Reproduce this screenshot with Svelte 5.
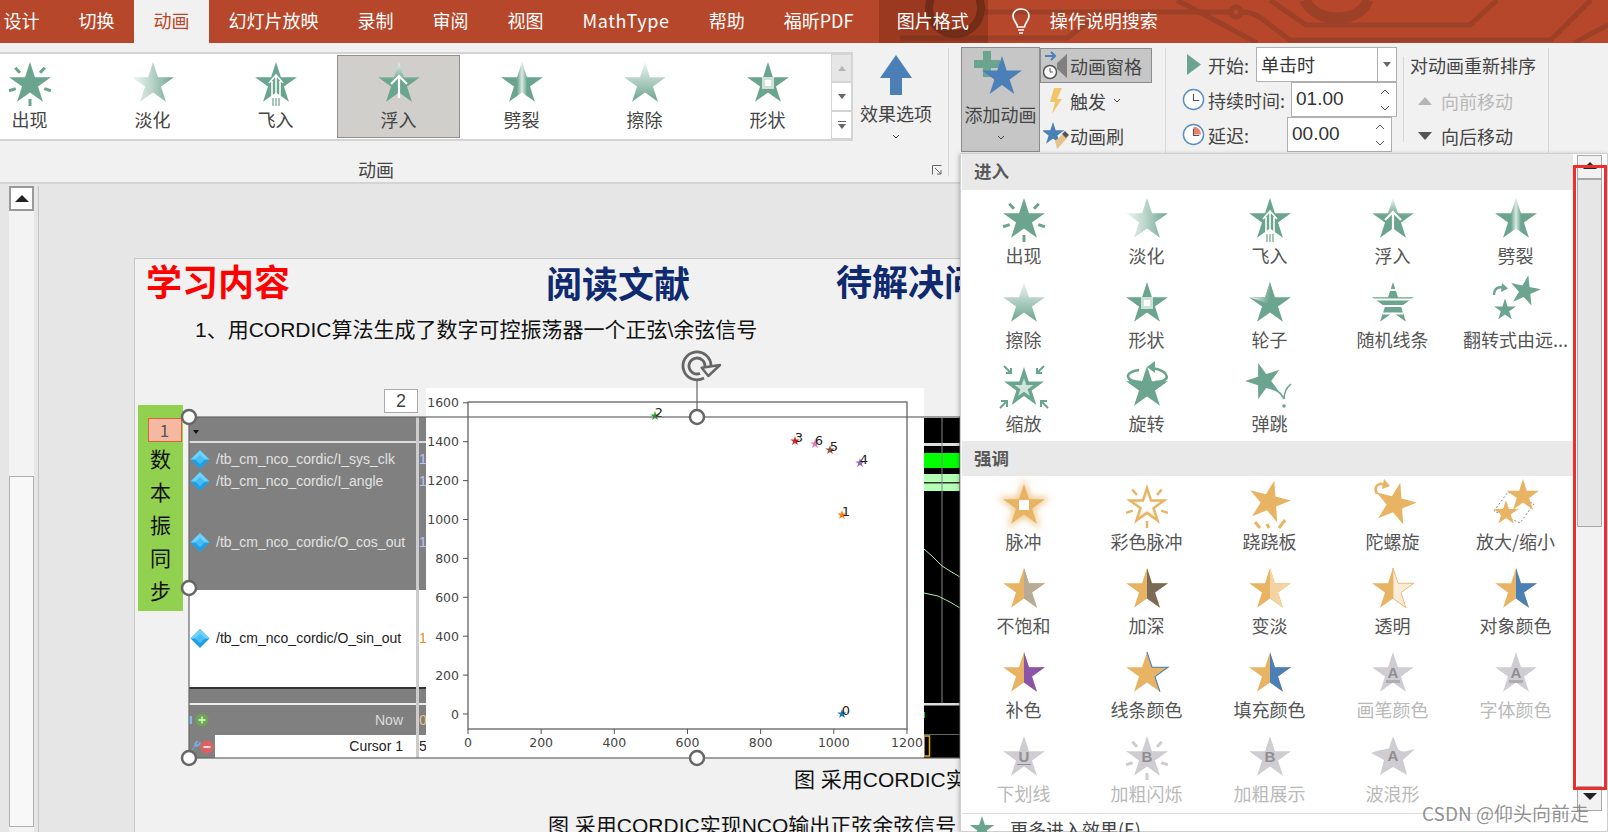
<script>
	const GREEN = '#6ba48f';
	const GOLD = '#e8b464';
	const GRAY = '#cfcdd1';

	function star(r = 22, cx = 0, cy = 0, rot = 0) {
		let pts = [];
		for (let i = 0; i < 10; i++) {
			const rad = i % 2 == 0 ? r : r * 0.382;
			const a = ((i * 36 + rot - 90) * Math.PI) / 180;
			pts.push((cx + rad * Math.cos(a)).toFixed(2) + ' ' + (cy + rad * Math.sin(a)).toFixed(2));
		}
		return 'M' + pts.join('L') + 'Z';
	}

	// the right half of the star, for the two-tone emphasis icons
	const halfR = 'M0 -22L5 -6.8L21 -6.8L8 2.6L13 17.8L0 8.4Z';
	const S = star();
	const rays = [42, 108, 180, 252, 318].map((d) => {
		const a = ((d - 90) * Math.PI) / 180;
		return { x1: 15 * Math.cos(a), y1: 15 * Math.sin(a), x2: 22 * Math.cos(a), y2: 22 * Math.sin(a) };
	});

	const tabs = ['设计', '切换', '动画', '幻灯片放映', '录制', '审阅', '视图', 'MathType', '帮助', '福昕PDF'];
	const gallery = [
		{ label: '出现', icon: 'appear' },
		{ label: '淡化', icon: 'fade' },
		{ label: '飞入', icon: 'fly' },
		{ label: '浮入', icon: 'float', on: true },
		{ label: '劈裂', icon: 'split' },
		{ label: '擦除', icon: 'wipe' },
		{ label: '形状', icon: 'shape' }
	];
	const enter = [
		{ label: '出现', icon: 'appear' },
		{ label: '淡化', icon: 'fade' },
		{ label: '飞入', icon: 'fly' },
		{ label: '浮入', icon: 'float' },
		{ label: '劈裂', icon: 'split' },
		{ label: '擦除', icon: 'wipe' },
		{ label: '形状', icon: 'shape' },
		{ label: '轮子', icon: 'wheel' },
		{ label: '随机线条', icon: 'lines' },
		{ label: '翻转式由远...', icon: 'flip' },
		{ label: '缩放', icon: 'zoom' },
		{ label: '旋转', icon: 'swivel' },
		{ label: '弹跳', icon: 'bounce' }
	];
	const emphasis = [
		{ label: '脉冲', icon: 'pulse' },
		{ label: '彩色脉冲', icon: 'colorpulse' },
		{ label: '跷跷板', icon: 'teeter' },
		{ label: '陀螺旋', icon: 'spin' },
		{ label: '放大/缩小', icon: 'grow' },
		{ label: '不饱和', icon: 'half', c: '#b7aa96' },
		{ label: '加深', icon: 'half', c: '#7a6b57' },
		{ label: '变淡', icon: 'half', c: '#f3d3a2' },
		{ label: '透明', icon: 'clear' },
		{ label: '对象颜色', icon: 'half', c: '#4a7fb8' },
		{ label: '补色', icon: 'half', c: '#8a55a8' },
		{ label: '线条颜色', icon: 'line' },
		{ label: '填充颜色', icon: 'half', c: '#4a7fb8' },
		{ label: '画笔颜色', icon: 'letter', ch: 'A', bar: true, off: true },
		{ label: '字体颜色', icon: 'letter', ch: 'A', bar: true, off: true },
		{ label: '下划线', icon: 'letter', ch: 'U', under: true, off: true },
		{ label: '加粗闪烁', icon: 'flash', ch: 'B', off: true },
		{ label: '加粗展示', icon: 'letter', ch: 'B', off: true },
		{ label: '波浪形', icon: 'wave', ch: 'A', off: true }
	];

	// plot is drawn in page coordinates through its viewBox
	const yTicks = [1600, 1400, 1200, 1000, 800, 600, 400, 200, 0].map((v) => ({ v, y: 713 - v * 0.1945 }));
	const xTicks = [0, 200, 400, 600, 800, 1000, 1200].map((v) => ({ v, x: 468 + v * 0.3658 }));
	const points = [
		{ n: 0, x: 842, y: 713, c: '#1f77b4' },
		{ n: 1, x: 842, y: 514, c: '#ff7f0e' },
		{ n: 2, x: 655, y: 415, c: '#2ca02c' },
		{ n: 3, x: 795, y: 440, c: '#d62728' },
		{ n: 4, x: 860, y: 462, c: '#9467bd' },
		{ n: 5, x: 830, y: 449, c: '#8c564b' },
		{ n: 6, x: 815, y: 443, c: '#e377c2' }
	];
	const handles = [
		[189, 416], [697, 416], [189, 587], [189, 757], [697, 757]
	];
	const vertical = ['数', '本', '振', '同', '步'];
</script>

{#snippet icon(it)}
	<svg class="ico" viewBox="-30 -28 60 48" aria-hidden="true">
		{#if it.icon == 'appear'}
			{#each rays as r}
				<line x1={r.x1} y1={r.y1} x2={r.x2} y2={r.y2} stroke={GREEN} stroke-width="3" />
			{/each}
			<path d={S} fill={GREEN} stroke="#fff" stroke-width="1.5" paint-order="stroke" />
		{:else if it.icon == 'fade'}
			<path d={S} fill="url(#gFade)" />
		{:else if it.icon == 'fly'}
			<path d={S} fill={GREEN} />
			<path d="M-7 -1L0 -9L7 -1M-4 -3V12M0 -8V12M4 -3V12" fill="none" stroke="#fff" stroke-width="1.6" />
			<path d="M-3 14V22M0 14V22M3 14V22" stroke={GREEN} stroke-width="1.2" fill="none" />
		{:else if it.icon == 'float'}
			<path d={S} fill="url(#gFloat)" />
			<path d="M-8 0L0 -8L8 0M0 -8V14" fill="none" stroke="#fff" stroke-width="2.2" />
		{:else if it.icon == 'split'}
			<path d={S} fill="url(#gSplit)" />
		{:else if it.icon == 'wipe'}
			<path d={S} fill="url(#gWipe)" />
		{:else if it.icon == 'shape'}
			<path d={S} fill={GREEN} />
			<rect x="-6" y="-7" width="12" height="12" fill="#cfe0da" />
			<rect x="-3" y="-4" width="6" height="6" fill="#fff" />
		{:else if it.icon == 'wheel'}
			<path d={S} fill={GREEN} />
			<path d="M0 0L-21 -6.8H-5L0 -22Z" fill="url(#gWheel)" />
		{:else if it.icon == 'lines'}
			<path d={S} fill={GREEN} />
			<path d="M-4 -14H4M-22 -4.5H22M-22 2H22M-10 9.5H10" stroke="#fff" stroke-width="1.8" />
		{:else if it.icon == 'flip'}
			<path d={star(16, 9, -13, 12)} fill={GREEN} />
			<path d={star(11.5, -11, 6, 0)} fill={GREEN} />
			<path d="M-22 -9C-22 -16 -17 -18 -12 -16" fill="none" stroke={GREEN} stroke-width="2.4" />
			<path d="M-14 -21L-8 -15.5L-15 -12Z" fill={GREEN} />
		{:else if it.icon == 'zoom'}
			<path d={star(21)} fill={GREEN} />
			<path d={star(10, 0, 0)} fill="#d2e2dc" />
			<path d="M-20 -22L-13 -15M-13 -20V-15H-18M20 -22L13 -15M13 -20V-15H18M-24 20L-17 13M-23 13H-17V19M24 20L17 13M23 13H17V19" stroke={GREEN} stroke-width="2" fill="none" />
		{:else if it.icon == 'swivel'}
			<path d={S} fill={GREEN} />
			<path d="M-8 -18C-24 -16 -22 -6 -6 -6M8 -6C24 -6 24 -16 6 -20" fill="none" stroke={GREEN} stroke-width="2.6" />
			<path d="M8 -27V-15L0 -21Z" fill={GREEN} />
		{:else if it.icon == 'bounce'}
			<path d={star(19, -6, -7, -18)} fill={GREEN} />
			<path d="M21 -4C16 0 14 6 14 11C11 5 8 3 5 2" fill="none" stroke={GREEN} stroke-width="1.6" />
			<circle cx="14" cy="18" r="1.8" fill={GREEN} />
		{:else if it.icon == 'pulse'}
			<path d={star(28)} fill={GOLD} opacity="0.75" filter="url(#blur3)" />
			<path d={S} fill={GOLD} />
			<rect x="-5" y="-6" width="10" height="10" fill="#fff" />
		{:else if it.icon == 'colorpulse'}
			{#each rays as r}
				<line x1={r.x1} y1={r.y1} x2={r.x2} y2={r.y2} stroke={GOLD} stroke-width="2.4" />
			{/each}
			<path d={S} fill={GOLD} stroke="#fff" stroke-width="1.5" paint-order="stroke" />
			<path d={star(14)} fill="url(#gGlow)" />
		{:else if it.icon == 'teeter'}
			<path d={star(22, -1, -4, 14)} fill={GOLD} />
			<path d="M-15 16L-10 22M15 14L9 22M-3 18L-1 22" stroke={GOLD} stroke-width="3" fill="none" />
		{:else if it.icon == 'spin'}
			<path d={star(22, 2, -2, 14)} fill={GOLD} />
			<path d="M-16 -12C-20 -20 -14 -24 -8 -21" fill="none" stroke={GOLD} stroke-width="2.6" />
			<path d="M-9 -27L-3 -20L-11 -17Z" fill={GOLD} />
		{:else if it.icon == 'grow'}
			<path d="M-22 5L-8 -14L18 -2L4 17Z" fill="none" stroke="#8c8c8c" stroke-dasharray="2 2" />
			<path d={star(17, 7, -10, 0)} fill={GOLD} />
			<path d={star(13, -10, 7, 0)} fill={GOLD} />
		{:else if it.icon == 'half'}
			<path d={S} fill={GOLD} />
			<path d={halfR} fill={it.c} />
		{:else if it.icon == 'clear'}
			<path d={S} fill={GOLD} />
			<path d={halfR} fill="#f9ecd9" stroke={GOLD} stroke-width="0.8" />
		{:else if it.icon == 'line'}
			<path d={S} fill={GOLD} />
			<path d="M0 -22L5 -6.8L21 -6.8L8 2.6L13 17.8" fill="none" stroke="#4a7fb8" stroke-width="1.1" />
		{:else if it.icon == 'wave'}
			<path d="M0 -22L5 -9C10 -4 15 -8 22 -9L10 2L14 17L0 9L-13 17L-9 2L-22 -5C-12 -9 -8 -8 -4 -10Z" fill={GRAY} />
			<text x="0" y="3" class="ltr">{it.ch}</text>
		{:else}
			{#if it.icon == 'flash'}
				{#each rays as r}
					<line x1={r.x1} y1={r.y1} x2={r.x2} y2={r.y2} stroke={GRAY} stroke-width="3" />
				{/each}
			{/if}
			<path d={S} fill={GRAY} stroke="#fff" stroke-width={it.icon == 'flash' ? 1.5 : 0} paint-order="stroke" />
			<text x="0" y="4" class="ltr">{it.ch}</text>
			{#if it.bar}
				<rect x="-7" y="6" width="14" height="3" fill="#adacb0" />
			{/if}
			{#if it.under}
				<line x1="-7" x2="7" y1="6.5" y2="6.5" stroke="#8f8e92" />
			{/if}
		{/if}
	</svg>
{/snippet}

{#snippet cell(it)}
	<div class="cell" class:off={it.off}>
		{@render icon(it)}
		<span>{it.label}</span>
	</div>
{/snippet}

{#snippet chevron()}
	<svg class="chev" viewBox="0 0 8 5"><path d="M1 1L4 4L7 1" fill="none" stroke="#444" /></svg>
{/snippet}

{#snippet spinner()}
	<div class="spin">
		<svg viewBox="0 0 10 6"><path d="M1 5L5 1L9 5" fill="none" stroke="#555" /></svg>
		<svg viewBox="0 0 10 6"><path d="M1 1L5 5L9 1" fill="none" stroke="#555" /></svg>
	</div>
{/snippet}

{#snippet diamond()}
	<svg viewBox="0 0 20 20"><path d="M10 0L20 10L10 20L0 10Z" fill="#1f9fe6" /><path d="M10 0L20 10H0Z" fill="#6fd0fa" /><path d="M10 5L15 10L10 15L5 10Z" fill="#47bdf5" /></svg>
{/snippet}

<svg class="defs" width="0" height="0">
	<defs>
		<linearGradient id="gFade"><stop offset="0" stop-color="#eef5f2" /><stop offset="0.45" stop-color="#bcd6cc" /><stop offset="1" stop-color="#6ba48f" /></linearGradient>
		<linearGradient id="gWipe" x2="0" y2="1"><stop offset="0" stop-color="#eef5f2" /><stop offset="1" stop-color="#6ba48f" /></linearGradient>
		<linearGradient id="gFloat" x2="0" y2="1"><stop offset="0" stop-color="#eef5f2" /><stop offset="0.45" stop-color="#6ba48f" /></linearGradient>
		<linearGradient id="gSplit"><stop offset="0.38" stop-color="#6ba48f" /><stop offset="0.5" stop-color="#dbe9e4" /><stop offset="0.62" stop-color="#6ba48f" /></linearGradient>
		<linearGradient id="gWheel" gradientUnits="userSpaceOnUse" x1="-21" y1="-8" x2="-1" y2="-3"><stop offset="0" stop-color="#fff" /><stop offset="1" stop-color="#6ba48f" /></linearGradient>
		<radialGradient id="gGlow"><stop offset="0.4" stop-color="#fff" /><stop offset="1" stop-color="#fbeed8" /></radialGradient>
		<filter id="blur3" x="-50%" y="-50%" width="200%" height="200%"><feGaussianBlur stdDeviation="3.500" /></filter>
	</defs>
</svg>

<div class="app">
	<header class="tabs">
		<svg class="circuit" viewBox="0 0 1608 43" preserveAspectRatio="none">
			<g fill="none" stroke="#9c4028" stroke-width="5">
				<path d="M985 12H1230M1242 12C1258 12 1262 20 1290 40H1551L1591 0" />
				<path d="M1177 0L1257 43" />
				<path d="M1270 0L1306 25H1470L1497 0" />
				<path d="M1608 25L1574 43" />
				<path d="M900 38H1067L1100 14" />
				<circle cx="1236" cy="12" r="5" />
			</g>
			<path d="M1305 0C1315 24 1360 24 1368 0" fill="none" stroke="#9c4028" stroke-width="11" />
			<circle cx="955" cy="8" r="26" fill="none" stroke="#82351f" stroke-width="8" />
		</svg>
		{#each tabs as t}
			<div class="tab" class:active={t == '动画'} class:wide={t == 'MathType'}>{t}</div>
		{/each}
		<div class="tab fmt">图片格式</div>
		<svg class="bulb" viewBox="0 0 20 28"><path d="M6.500 20C6 15 2 14 2 9C2 4.500 5.500 2 10 2S18 4.500 18 9C18 14 14 15 13.500 20ZM7 23H13M8 26H12" fill="none" stroke="#fff" stroke-width="1.700" /></svg>
		<div class="search">操作说明搜索</div>
	</header>

	<section class="ribbon">
		<div class="group-anim">
			<div class="anim-top">
				<div class="gallery">
					<div class="gal-items">
						{#each gallery as it}
							<div class="gal-item" class:on={it.on}>
								{@render icon(it)}
								<span>{it.label}</span>
							</div>
						{/each}
					</div>
					<div class="gal-scroll">
						<button class="dis"><i class="up"></i></button>
						<button><i class="down"></i></button>
						<button class="more"><b></b><i class="down"></i></button>
					</div>
				</div>
				<div class="effect">
					<svg viewBox="0 0 32 40"><path d="M16 0L32 23H22V40H10V23H0Z" fill="#4a7fb8" /></svg>
					<span>效果选项</span>
					{@render chevron()}
				</div>
			</div>
			<div class="group-label">
				动画
				<svg class="launch" viewBox="0 0 10 10"><path d="M0.500 9.500V0.500H9.500M3 3L9 9M5 9H9V5" fill="none" stroke="#666" /></svg>
			</div>
		</div>

		<div class="add">
			<svg viewBox="0 0 60 50">
				<path d="M12 1H20V10H29V18H20V27H12V18H3V10H12Z" fill={GREEN} />
				<path d={star(21, 31, 27)} fill="#4a7fb8" />
			</svg>
			<span>添加动画</span>
			{@render chevron()}
		</div>

		<div class="tools">
			<div class="tool pane">
				<svg viewBox="0 0 26 30">
					<path d="M2 5H11M8 1L12 5L8 9" fill="none" stroke="#4a7fb8" stroke-width="2" />
					<path d="M14 12L24 3V27L14 18Z" fill="#7f7f7f" />
					<circle cx="7" cy="21" r="6.500" fill="#fff" stroke="#555" stroke-width="1.500" />
					<path d="M7 17V21H10" fill="none" stroke="#555" />
				</svg>
				动画窗格
			</div>
			<div class="tool">
				<svg viewBox="0 0 26 30"><path d="M11 2H19L14 13H19L9 28L12 16H7Z" fill="#f0c668" /></svg>
				触发 {@render chevron()}
			</div>
			<div class="tool">
				<svg viewBox="0 0 26 30">
					<path d={star(12, 10, 13)} fill="#4a7fb8" />
					<path d="M12 20L20 13L24 17L17 25L14 28Z" fill="#e8c288" />
					<path d="M19 13L22 10L26 14L23 17Z" fill="#555" />
				</svg>
				动画刷
			</div>
		</div>

		<div class="timing">
			<div class="t-row">
				<svg class="play" viewBox="0 0 14 21"><path d="M0 0L14 10.500L0 21Z" fill={GREEN} /></svg>
				<span class="t-label">开始:</span>
				<div class="combo">单击时<div class="combo-btn"><i class="down"></i></div></div>
			</div>
			<div class="t-row">
				<svg class="clock" viewBox="0 0 24 24"><circle cx="12" cy="12" r="10.500" fill="#fff" stroke="#5a8fc4" stroke-width="1.500" /><path d="M12 6V13H18" fill="none" stroke="#555" stroke-width="1.200" /></svg>
				<span class="t-label">持续时间:</span>
				<div class="num first">01.00 {@render spinner()}</div>
			</div>
			<div class="t-row">
				<svg class="clock" viewBox="0 0 24 24"><circle cx="12" cy="12" r="10.500" fill="#fff" stroke="#5a8fc4" stroke-width="1.500" /><path d="M12 12V4A8 8 0 0 1 20 12Z" fill="#e8836a" /><path d="M12 6V13H18" fill="none" stroke="#555" stroke-width="1.200" /></svg>
				<span class="t-label">延迟:</span>
				<div class="num second">00.00 {@render spinner()}</div>
			</div>
		</div>

		<div class="reorder">
			<div>对动画重新排序</div>
			<div class="mv disabled"><i class="up"></i>向前移动</div>
			<div class="mv"><i class="down"></i>向后移动</div>
		</div>
	</section>

	<main class="stage">
		<div class="side-scroll">
			<button><i class="up big"></i></button>
			<div class="side-thumb"></div>
		</div>

		<div class="slide">
			<div class="title red">学习内容</div>
			<div class="title navy one">阅读文献</div>
			<div class="title navy two">待解决问题</div>
			<div class="line1">1、用CORDIC算法生成了数字可控振荡器一个正弦\余弦信号</div>

			<div class="note">
				<div class="badge">1</div>
				{#each vertical as ch}
					<div class="vch">{ch}</div>
				{/each}
			</div>
			<div class="badge2">2</div>

			<div class="wave">
				<div class="names">
					<div class="w-gray">
						<div class="w-head"><i class="down tiny"></i></div>
						<div class="sig top">{@render diamond()}/tb_cm_nco_cordic/I_sys_clk</div>
						<div class="sig">{@render diamond()}/tb_cm_nco_cordic/I_angle</div>
						<div class="sig gap">{@render diamond()}/tb_cm_nco_cordic/O_cos_out</div>
					</div>
					<div class="w-white">
						<div class="sig dark">{@render diamond()}/tb_cm_nco_cordic/O_sin_out</div>
					</div>
					<div class="w-rule"></div>
					<div class="w-strip"></div>
					<div class="w-now">
						<svg viewBox="-6 0 20 14"><rect x="-6" y="3" width="3" height="8" fill="#8fb4e8" /><circle cx="7" cy="7" r="6.500" fill="#6aa84f" /><path d="M3.500 7H10.500M7 3.500V10.500" stroke="#e8f5e0" stroke-width="1.500" /></svg>
						<span>Now</span>
					</div>
					<div class="w-cursor">
						<svg viewBox="-11 0 25 14"><path d="M-10 13L-5 6M-5 6C-6 3 -4 1 -2 1L-4 4L-2 5L0 2C1 5 -2 7 -5 6" fill="#7fa6e0" stroke="#7fa6e0" /><circle cx="7" cy="7" r="6.500" fill="#e06060" /><path d="M3.500 7H10.500" stroke="#fde" stroke-width="2" /></svg>
						<div>Cursor 1</div>
					</div>
				</div>
				<div class="vals">
					<div class="v-gray">
						<div class="v-head"></div>
						<div class="v-val top">1</div>
						<div class="v-val">1</div>
						<div class="v-val gap">1</div>
					</div>
					<div class="v-white"><div class="v-val orange">1</div></div>
					<div class="w-rule"></div>
					<div class="w-strip"></div>
					<div class="v-val now">0</div>
					<div class="v-val cur">5</div>
				</div>
			</div>

			<svg class="plot" viewBox="426 387 498 370">
				<rect x="468" y="401" width="439" height="327" fill="none" stroke="#777" stroke-width="1.500" />
				{#each yTicks as t}
					<line x1="463" x2="468" y1={t.y} y2={t.y} stroke="#555" />
					<text x="459" y={t.y + 4.500} text-anchor="end" class="tick">{t.v}</text>
				{/each}
				{#each xTicks as t}
					<line x1={t.x} x2={t.x} y1="728" y2="733" stroke="#555" />
					<text x={t.x} y="746" text-anchor="middle" class="tick">{t.v}</text>
				{/each}
				{#each points as p}
					<path d={star(5, p.x, p.y)} fill={p.c} />
					<text x={p.x + 4} y={p.y + 1} text-anchor="middle" class="tick pt">{p.n}</text>
				{/each}
			</svg>

			<svg class="trace" viewBox="924 417 36 340">
				<rect x="924" y="417" width="36" height="340" fill="#000" />
				<rect x="924" y="442" width="36" height="3" fill="#ddd" />
				<rect x="924" y="452" width="36" height="15" fill="#00ff00" />
				<rect x="924" y="473" width="36" height="17" fill="#b3ffb3" />
				<rect x="924" y="481" width="36" height="1.500" fill="#333" />
				<rect x="941.500" y="417" width="1" height="285" fill="#888" />
				<path d="M924 548L932 555L942 565L950 570L960 576M924 592L938 595L950 601L960 607" fill="none" stroke="#a8eea8" />
				<rect x="924" y="702" width="36" height="2.500" fill="#ddd" />
				<rect x="924" y="733" width="36" height="1" fill="#666" />
				<rect x="924" y="711" width="1" height="6" fill="#00d000" />
				<rect x="924" y="735" width="5.500" height="20" fill="none" stroke="#e0b020" stroke-width="1.500" />
			</svg>

			<div class="cap1">图 采用CORDIC实现NCO输出正弦余弦信号</div>
			<div class="cap2">图 采用CORDIC实现NCO输出正弦余弦信号</div>

			<!-- selection frame, in page coordinates -->
			<svg class="select" viewBox="134 340 840 440">
				<rect x="189" y="416" width="771" height="341" fill="none" stroke="#666" stroke-width="1.200" />
				<line x1="697" x2="697" y1="380" y2="408" stroke="#666" stroke-width="1.200" />
				<g fill="none" stroke="#666" stroke-width="2.800">
					<path d="M711 365A14 14 0 1 0 704 377" />
					<path d="M705 365A8 8 0 1 0 700 372.400" />
				</g>
				<path d="M701.700 366.700L720 364L708.300 375Z" fill="#f1f1f1" stroke="#666" stroke-width="2.500" stroke-linejoin="round" />
				{#each handles as h}
					<circle cx={h[0]} cy={h[1]} r="7" fill="#fff" stroke="#666" stroke-width="2.500" />
				{/each}
			</svg>
		</div>
	</main>

	<div class="dropdown">
		<div class="sec">进入</div>
		<div class="grid">
			{#each enter as it}
				{@render cell(it)}
			{/each}
		</div>
		<div class="sec second">强调</div>
		<div class="grid pad">
			{#each emphasis as it}
				{@render cell(it)}
			{/each}
		</div>
		<div class="more-row">
			<svg viewBox="-22 -22 44 44"><path d={S} fill={GREEN} /></svg>
			更多进入效果(E)
		</div>

		<div class="vscroll">
			<button><i class="up big"></i></button>
			<div class="vthumb"></div>
			<div class="vtrack"></div>
			<button class="dn"><i class="down big"></i></button>
		</div>
	</div>

	<div class="redbox"></div>
	<div class="watermark">CSDN @仰头向前走</div>
</div>

<style>
	:global(body) {
		margin: 0;
		background: #e6e6e6;
	}
	.defs {
		position: absolute;
	}
	.app {
		position: relative;
		width: 1608px;
		height: 832px;
		overflow: hidden;
		display: flex;
		flex-direction: column;
		font-family: "Noto Sans CJK SC", "Liberation Sans", sans-serif;
		font-size: 18px;
		color: #444;
		background: #e6e6e6;
	}
	i {
		display: block;
		width: 0;
		height: 0;
		border-left: 4px solid transparent;
		border-right: 4px solid transparent;
	}
	i.up {
		border-bottom: 5px solid #b5b5b5;
	}
	i.down {
		border-top: 5px solid #666;
	}
	i.big.up {
		border-left-width: 7px;
		border-right-width: 7px;
		border-bottom: 7px solid #222;
	}
	i.big.down {
		border-left-width: 7px;
		border-right-width: 7px;
		border-top: 7px solid #222;
	}
	button {
		padding: 0;
		margin: 0;
		display: flex;
		align-items: center;
		justify-content: center;
		background: #fff;
		border: 1px solid #d0d0d0;
	}

	/* title bar */
	.tabs {
		position: relative;
		height: 43px;
		flex: none;
		display: flex;
		align-items: stretch;
		background: #b7472a;
		color: #fff;
		padding-left: 0;
		overflow: hidden;
	}
	.circuit {
		position: absolute;
		left: 0;
		top: 0;
		width: 1608px;
		height: 43px;
	}
	.tab {
		position: relative;
		padding: 0 19.500px;
		line-height: 41px;
		white-space: nowrap;
	}
	.tab:first-of-type {
		margin-left: -16px;
	}
	.tab.wide {
		letter-spacing: 0.6px;
	}
	.tab.active {
		background: #f1f1f1;
		color: #b7472a;
	}
	.tab.fmt {
		background: rgba(80, 20, 5, 0.28);
		margin-left: 6px;
		padding: 0 18px;
		width: 73px;
		box-sizing: content-box;
	}
	.bulb {
		position: relative;
		width: 20px;
		height: 28px;
		margin: 7px 0 0 23px;
	}
	.search {
		position: relative;
		line-height: 41px;
		margin-left: 19px;
	}

	/* ribbon */
	.ribbon {
		flex: none;
		height: 139px;
		display: flex;
		background: #f1f1f1;
		border-bottom: 2px solid #d4d4d4;
		color: #444;
		white-space: nowrap;
	}
	.group-anim {
		width: 948px;
		flex: none;
		margin-top: 5px;
		border-right: 1px solid #d8d8d8;
		height: 128px;
		display: flex;
		flex-direction: column;
	}
	.anim-top {
		display: flex;
	}
	.gallery {
		margin-top: 4px;
		width: 853px;
		height: 89px;
		box-sizing: border-box;
		background: #fff;
		border-top: 2px solid #d4d4d4;
		border-bottom: 2px solid #d4d4d4;
		display: flex;
		justify-content: space-between;
		overflow: hidden;
	}
	.gal-items {
		display: flex;
		margin-left: -32px;
	}
	.gal-item {
		width: 123px;
		height: 83px;
		box-sizing: border-box;
		display: flex;
		flex-direction: column;
		align-items: center;
		padding-top: 0;
		border: 1px solid transparent;
		margin-top: 1px;
	}
	.gal-item span {
		line-height: 24px;
		margin-top: 3px;
	}
	.gal-item.on {
		background: #d0cfcc;
		border-color: #8e8e8e;
	}
	.ico {
		width: 60px;
		height: 48px;
		overflow: visible;
		flex: none;
	}
	.ltr {
		font-family: "Liberation Sans", sans-serif;
		font-size: 15px;
		font-weight: 700;
		fill: #8f8e92;
		text-anchor: middle;
	}
	.gal-scroll {
		width: 22px;
		display: flex;
		flex-direction: column;
		flex: none;
	}
	.gal-scroll button {
		flex: 1;
		border: 1px solid #d4d4d4;
		border-right: 2px solid #d4d4d4;
	}
	.gal-scroll button.dis {
		background: #e6e6e6;
	}
	.gal-scroll .more {
		flex-direction: column;
		gap: 2px;
	}
	.gal-scroll b {
		display: block;
		width: 8px;
		height: 1px;
		background: #666;
	}
	.effect {
		width: 86px;
		display: flex;
		flex-direction: column;
		align-items: center;
	}
	.effect svg:first-child {
		width: 32px;
		height: 40px;
		margin-top: 7px;
	}
	.effect span {
		margin-top: 5px;
		line-height: 26px;
	}
	.chev {
		width: 8px;
		height: 5px;
		margin-top: 8px;
		flex: none;
	}
	.group-label {
		position: relative;
		height: 20px;
		margin-top: 18px;
		line-height: 20px;
		text-align: center;
		padding-right: 196px;
	}
	.launch {
		position: absolute;
		left: 932px;
		top: 6px;
		width: 10px;
		height: 10px;
	}
	.add {
		width: 79px;
		height: 105px;
		margin: 4px 0 0 12px;
		box-sizing: border-box;
		flex: none;
		background: #c6c6c6;
		border: 1px solid #8c8c8c;
		display: flex;
		flex-direction: column;
		align-items: center;
	}
	.add svg:first-child {
		width: 60px;
		height: 50px;
		margin-top: 2px;
	}
	.add span {
		margin-top: 1px;
		line-height: 26px;
	}
	.tools {
		width: 125px;
		flex: none;
		margin-top: 5px;
		height: 105px;
		border-right: 1px solid #d8d8d8;
	}
	.tool {
		height: 35px;
		width: 112px;
		box-sizing: border-box;
		display: flex;
		align-items: center;
		gap: 1px;
		padding-left: 2px;
		border: 1px solid transparent;
	}
	.tool svg:first-child {
		width: 26px;
		height: 30px;
		flex: none;
	}
	.tool .chev {
		margin-top: 0;
		margin-left: 6px;
	}
	.tool.pane {
		background: #c6c6c6;
		border-color: #8c8c8c;
	}
	.timing {
		width: 237px;
		flex: none;
		margin-top: 4px;
	}
	.t-row {
		position: relative;
		height: 35px;
		display: flex;
		align-items: center;
	}
	.play {
		width: 14px;
		height: 21px;
		margin-left: 21px;
		margin-right: 7px;
		flex: none;
	}
	.clock {
		width: 23px;
		height: 23px;
		margin-left: 16px;
		margin-right: 3px;
		flex: none;
	}
	.t-label {
		color: #444;
	}
	.combo,
	.num {
		position: absolute;
		background: #fff;
		border: 1px solid #b0b0b0;
		box-sizing: border-box;
		height: 35px;
		line-height: 32px;
		padding-left: 4px;
		color: #333;
	}
	.combo {
		left: 90px;
		top: 0;
		width: 141px;
	}
	.combo-btn {
		position: absolute;
		right: 0;
		top: 0;
		bottom: 0;
		width: 18px;
		border-left: 1px solid #b0b0b0;
		display: flex;
		align-items: center;
		justify-content: center;
	}
	.num {
		font-family: "Liberation Sans", sans-serif;
		font-size: 19px;
	}
	.num.first {
		left: 125px;
		top: 0;
		width: 106px;
	}
	.num.second {
		left: 121px;
		top: 0;
		width: 105px;
	}
	.spin {
		position: absolute;
		right: 6px;
		top: 6px;
		display: flex;
		flex-direction: column;
		gap: 10px;
	}
	.spin svg {
		width: 10px;
		height: 6px;
		display: block;
	}
	.reorder {
		width: 146px;
		height: 128px;
		flex: none;
		margin-top: 5px;
		border-right: 1px solid #d8d8d8;
		box-sizing: border-box;
		padding-left: 7px;
		position: relative;
	}
	.reorder > div:first-child {
		height: 35px;
		margin-top: 0;
		line-height: 35px;
	}
	.reorder::before {
		content: "";
		position: absolute;
		left: 0;
		top: 9px;
		height: 85px;
		border-left: 1px solid #d8d8d8;
	}
	.mv {
		height: 35px;
		display: flex;
		align-items: center;
		gap: 9px;
		padding-left: 8px;
	}
	.mv.disabled {
		color: #b8b8b8;
	}
	.mv i {
		border-left-width: 7px;
		border-right-width: 7px;
	}
	.mv i.up {
		border-bottom-width: 8px;
	}
	.mv i.down {
		border-top-width: 8px;
		border-top-color: #555;
	}

	/* page area */
	.stage {
		position: relative;
		flex: 1;
		display: flex;
		align-items: flex-start;
		background: #e6e6e6;
		overflow: hidden;
	}
	.side-scroll {
		width: 25px;
		margin-left: 9px;
		margin-top: 2px;
		height: 660px;
		background: #f3f3f3;
		flex: none;
		position: relative;
	}
	.side-scroll button {
		width: 25px;
		height: 25px;
		box-sizing: border-box;
		border: 2px solid #999;
	}
	.side-thumb {
		position: absolute;
		left: 0;
		top: 290px;
		width: 25px;
		height: 351px;
		box-sizing: border-box;
		background: #f8f8f8;
		border: 1px solid #b0b0b0;
	}
	.stage::before {
		content: "";
		position: absolute;
		left: 38px;
		top: 2px;
		bottom: 0;
		border-left: 1px solid #c4c4c4;
	}
	.slide {
		position: relative;
		margin: 74px 0 0 100px;
		width: 1100px;
		height: 620px;
		background: #f1f1f1;
		border: 1px solid #c8c8c8;
		box-sizing: border-box;
		font-family: "Liberation Sans", "Noto Sans CJK SC", sans-serif;
		color: #000;
	}
	/* things on the slide sit on a free canvas */
	.slide > * {
		position: absolute;
	}
	.title {
		font-family: "Noto Sans CJK SC", sans-serif;
		font-size: 36px;
		font-weight: 700;
		line-height: 40px;
		top: 1px;
		white-space: nowrap;
	}
	.red {
		left: 11px;
		color: #ff0000;
	}
	.navy {
		color: #0f2a6e;
	}
	.navy.one {
		left: 411px;
		top: 3px;
	}
	.navy.two {
		left: 701px;
		top: 1px;
	}
	.line1 {
		left: 60px;
		top: 57px;
		font-size: 21px;
		line-height: 28px;
		white-space: nowrap;
		color: #111;
	}
	.note {
		left: 3px;
		top: 146px;
		width: 45px;
		height: 206px;
		background: #92d050;
		display: flex;
		flex-direction: column;
		align-items: center;
		font-family: "Noto Sans CJK SC", sans-serif;
	}
	.badge {
		width: 34px;
		height: 24px;
		box-sizing: border-box;
		margin: 13px 0 0 8px;
		background: #f4b9a0;
		border: 1px solid #e0603a;
		text-align: center;
		line-height: 22px;
		font-size: 17px;
		color: #555;
	}
	.vch {
		font-size: 21px;
		height: 33px;
		line-height: 33px;
		color: #111;
	}
	.vch:first-of-type {
		margin-top: 1px;
	}
	.badge2 {
		left: 249px;
		top: 130px;
		width: 34px;
		height: 24px;
		box-sizing: border-box;
		background: #fff;
		border: 1px solid #aaa;
		text-align: center;
		line-height: 22px;
		font-size: 18px;
		color: #444;
	}
	.wave {
		left: 54px;
		top: 158px;
		width: 237px;
		height: 341px;
		display: flex;
		background: #fff;
		overflow: hidden;
	}
	.names {
		width: 227px;
		flex: none;
		border-right: 3px solid #ccc;
		font-size: 14px;
	}
	.w-gray {
		height: 173px;
		background: #808080;
		color: #e2e2e2;
	}
	.w-head {
		height: 26px;
		border-bottom: 2px solid #ddd;
		padding: 13px 0 0 4px;
		box-sizing: border-box;
	}
	i.tiny {
		border-left-width: 3px;
		border-right-width: 3px;
		border-top: 4px solid #111;
	}
	.sig {
		height: 22px;
		display: flex;
		align-items: center;
		gap: 6px;
		padding-left: 1px;
		white-space: nowrap;
	}
	.sig.top {
		margin-top: 5px;
	}
	.sig :global(svg) {
		width: 20px;
		height: 19px;
		flex: none;
	}
	.sig.gap {
		margin-top: 39px;
	}
	.w-white {
		height: 97px;
		background: #fff;
		padding-top: 37px;
		box-sizing: border-box;
	}
	.sig.dark {
		color: #222;
	}
	.w-rule {
		height: 2px;
		background: #333;
	}
	.w-strip {
		height: 14px;
		background: #808080;
		border-bottom: 2px solid #eee;
	}
	.w-now {
		height: 30px;
		background: #808080;
		color: #ddd;
		display: flex;
		align-items: center;
		justify-content: space-between;
		padding: 0 13px 0 0;
	}
	.w-now svg {
		width: 20px;
		height: 14px;
	}
	.w-cursor {
		height: 23px;
		background: #808080;
		display: flex;
		align-items: center;
		color: #222;
		gap: 1px;
	}
	.w-cursor svg {
		width: 25px;
		height: 14px;
		flex: none;
	}
	.w-cursor div {
		flex: 1;
		background: #fff;
		height: 23px;
		line-height: 23px;
		text-align: right;
		padding-right: 13px;
	}
	.vals {
		flex: 1;
		display: flex;
		flex-direction: column;
		font-size: 14px;
		white-space: nowrap;
		background: #808080;
	}
	.v-gray {
		height: 173px;
		background: #808080;
	}
	.v-head {
		height: 26px;
		border-bottom: 2px solid #ddd;
		box-sizing: border-box;
	}
	.v-val {
		height: 22px;
		line-height: 22px;
		color: #b8c4ff;
	}
	.v-val.top {
		margin-top: 5px;
	}
	.v-val.gap {
		margin-top: 39px;
	}
	.v-white {
		height: 97px;
		background: #fff;
		padding-top: 37px;
		box-sizing: border-box;
	}
	.v-val.orange {
		color: #e09020;
	}
	.v-val.now {
		height: 30px;
		line-height: 30px;
		color: #e8c080;
	}
	.v-val.cur {
		height: 23px;
		line-height: 23px;
		background: #fff;
		color: #222;
	}
	.plot {
		left: 291px;
		top: 129px;
		width: 498px;
		height: 370px;
		background: #fff;
	}
	.tick {
		font-family: "DejaVu Sans", sans-serif;
		font-size: 12.500px;
		fill: #444;
	}
	.tick.pt {
		fill: #222;
		font-size: 13px;
	}
	.trace {
		left: 789px;
		top: 159px;
		width: 36px;
		height: 340px;
	}
	.cap1,
	.cap2 {
		font-size: 21px;
		line-height: 28px;
		white-space: nowrap;
		color: #111;
	}
	.cap1 {
		left: 659px;
		top: 507px;
	}
	.cap2 {
		left: 413px;
		top: 553px;
	}
	.select {
		left: -1px;
		top: 82px;
		width: 840px;
		height: 440px;
		pointer-events: none;
	}

	/* dropdown gallery */
	.dropdown {
		position: absolute;
		left: 960px;
		top: 153px;
		width: 648px;
		height: 679px;
		box-sizing: border-box;
		background: #fff;
		border: 1px solid #cfcfcf;
		box-shadow: -1px 1px 4px rgba(0, 0, 0, 0.25);
		color: #555;
	}
	.sec {
		height: 36px;
		line-height: 33px;
		width: 611px;
		margin-left: 1px;
		padding-left: 12px;
		box-sizing: border-box;
		background: #e9e9e9;
		font-weight: 700;
		font-size: 17.500px;
		color: #595959;
	}
	.sec.second {
		height: 35px;
		line-height: 33px;
		margin-top: 4px;
	}
	.grid {
		display: grid;
		grid-template-columns: repeat(5, 123px);
		grid-auto-rows: 84px;
		padding: 2px 0 0 1px;
		width: 616px;
		height: 247px;
		box-sizing: border-box;
	}
	.grid.pad {
		padding-top: 2px;
		height: 337px;
	}
	.cell {
		display: flex;
		flex-direction: column;
		align-items: center;
		white-space: nowrap;
	}
	.cell span {
		line-height: 24px;
		margin-top: 3px;
	}
	.cell.off {
		color: #b9b9b9;
	}
	.more-row {
		border-top: 1px solid #ddd;
		margin: 0 36px 0 1px;
		height: 40px;
		display: flex;
		align-items: flex-start;
		padding-top: 2px;
		gap: 15px;
		padding-left: 7px;
		color: #444;
	}
	.more-row svg {
		width: 26px;
		height: 26px;
	}
	.vscroll {
		position: absolute;
		left: 616px;
		top: 1px;
		width: 25px;
		height: 656px;
		display: flex;
		flex-direction: column;
		background: #f2f2f2;
	}
	.vscroll button {
		width: 25px;
		height: 25px;
		flex: none;
		box-sizing: border-box;
		border: 1px solid #a8a8a8;
		border-bottom-width: 2px;
		background: #f2f2f2;
		align-items: flex-start;
		padding-top: 6px;
	}
	.vscroll button.dn {
		margin-top: auto;
		border-bottom-width: 1px;
	}
	.vthumb {
		height: 347px;
		flex: none;
		background: #e6e6e6;
		border: 1px solid #a8a8a8;
		border-top: none;
		box-sizing: border-box;
	}
	.vtrack {
		flex: 1;
	}
	.redbox {
		position: absolute;
		left: 1573px;
		top: 165px;
		width: 34px;
		height: 625px;
		box-sizing: border-box;
		border: 3px solid #ee2d2d;
	}
	.watermark {
		position: absolute;
		left: 1422px;
		top: 800px;
		color: rgba(110, 110, 110, 0.75);
		font-size: 19px;
		line-height: 26px;
		white-space: nowrap;
	}
</style>
